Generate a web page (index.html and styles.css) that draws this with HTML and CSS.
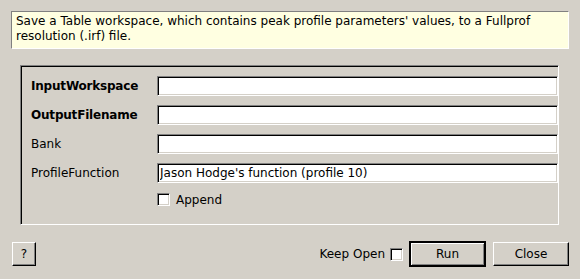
FILE: index.html
```html
<!DOCTYPE html>
<html lang="en">
  <head>
    <meta charset="UTF-8" />
    <meta name="viewport" content="width=device-width, initial-scale=1.0" />
    <title>SaveFullprofResolution</title>
    <link rel="stylesheet" href="styles.css">
  </head>
  <body>
    <div class="desc">
      Save a Table workspace, which contains peak profile parameters' values, to a Fullprof resolution (.irf) file.
    </div>

    <div class="group">
      <label class="label bold" for="inws">InputWorkspace</label>
      <input class="field" type="text" id="inws" />

      <label class="label bold" for="outfile">OutputFilename</label>
      <input class="field" type="text" id="outfile" />

      <label class="label" for="bank">Bank</label>
      <input class="field" type="text" id="bank" />

      <label class="label" for="func">ProfileFunction</label>
      <input class="field" type="text" id="func" value="Jason Hodge's function (profile 10)" />

      <span></span>
      <label class="check-row">
        <span class="box"></span>
        Append
      </label>
    </div>

    <div class="bar">
      <button class="btn help">?</button>
      <span class="spacer"></span>
      <label class="keep">Keep Open <span class="box"></span></label>
      <button class="btn run">Run</button>
      <button class="btn close">Close</button>
    </div>
  </body>
</html>
```

FILE: styles.css
```css
body {
  margin: 0;
  background: #d4d0c8;
  font-family: "DejaVu Sans", sans-serif;
  font-size: 12px;
  color: #000;
}
.desc {
  margin: 11px 11px 0 11px;
  height: 38px;
  box-sizing: border-box;
  padding: 2px 4px;
  line-height: 15px;
  background: #ffffe1;
  border: 1px solid;
  border-color: #808080 #ffffff #ffffff #808080;
}
.group {
  margin: 16px 21px 0 20px;
  height: 160px;
  box-sizing: border-box;
  border: 1px solid;
  border-color: #808080 #ffffff #ffffff #808080;
  box-shadow: inset 1px 1px 0 #000;
  padding: 10px 0 0 10px;
  display: grid;
  grid-template-columns: 126px 1fr;
  grid-auto-rows: 20px;
  row-gap: 9px;
  align-items: center;
}
.label {
  line-height: 20px;
}
.bold {
  font-weight: bold;
  letter-spacing: -0.2px;
}
.field {
  height: 20px;
  box-sizing: border-box;
  margin: 0;
  padding: 0 2px;
  font: inherit;
  background: #fff;
  border: 1px solid;
  border-color: #808080 #ffffff #ffffff #808080;
  box-shadow: inset 1px 1px 0 #000, inset -1px -1px 0 #d4d0c8;
  outline: none;
}
.check-row {
  align-self: start;
  margin-top: 1px;
  display: flex;
  align-items: center;
  gap: 6px;
  height: 13px;
}
.box {
  display: inline-block;
  width: 13px;
  height: 13px;
  box-sizing: border-box;
  background: #fff;
  border: 1px solid;
  border-color: #808080 #ffffff #ffffff #808080;
  box-shadow: inset 1px 1px 0 #000, inset -1px -1px 0 #d4d0c8;
}
.bar {
  display: flex;
  align-items: center;
  margin-top: 16px;
  padding: 0 11px 0 12px;
  height: 26px;
}
.spacer {
  flex: 1;
}
.keep {
  display: flex;
  align-items: center;
  gap: 5px;
  margin-right: 6px;
}
.btn {
  height: 24px;
  box-sizing: border-box;
  margin: 0;
  padding: 0;
  font: inherit;
  color: #000;
  background: #d4d0c8;
  border: 1px solid;
  border-color: #ffffff #000 #000 #ffffff;
  box-shadow: inset -1px -1px 0 #808080;
}
.help {
  width: 24px;
}
.run {
  width: 77px;
  height: 26px;
  border-width: 2px;
  border-color: #000;
  box-shadow: inset 1px 1px 0 #fff, inset -1px -1px 0 #808080;
}
.close {
  width: 76px;
  margin-left: 7px;
}
```
